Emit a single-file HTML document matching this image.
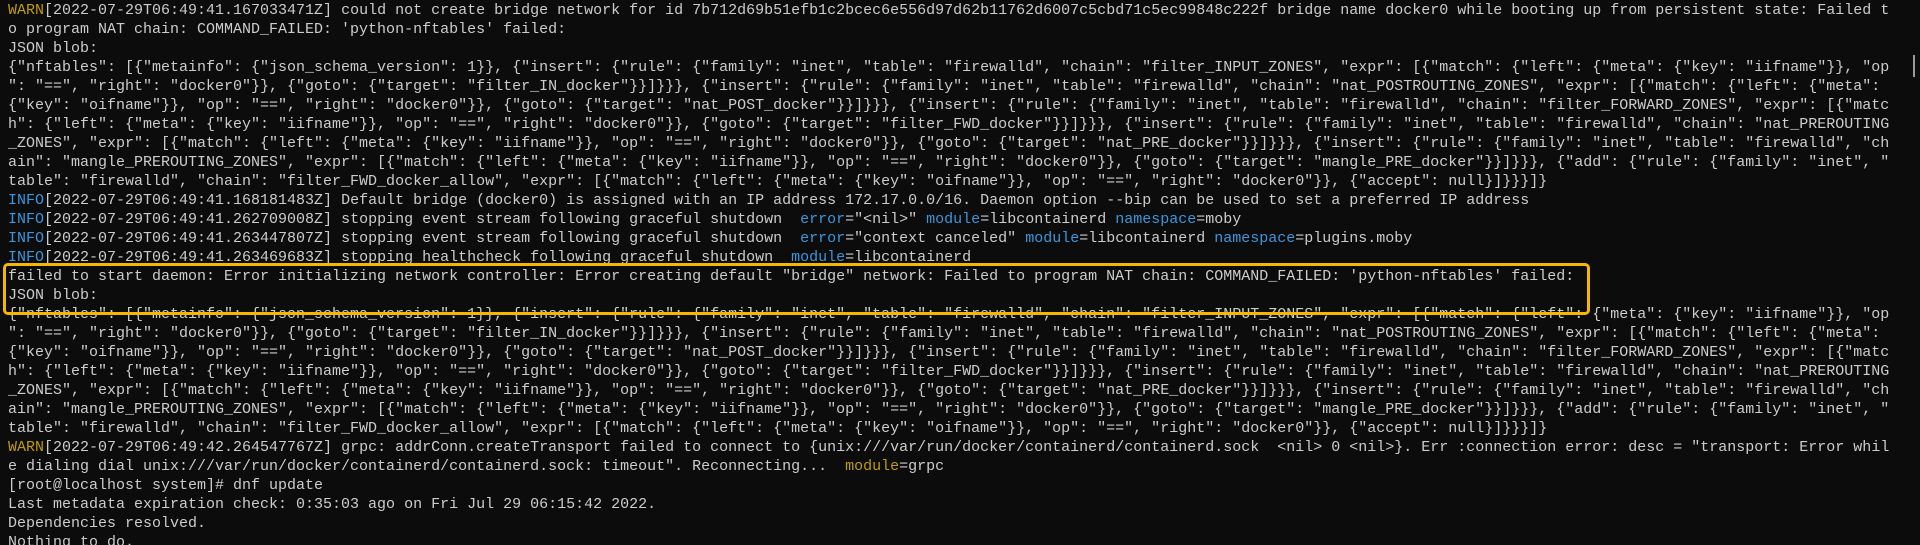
<!DOCTYPE html>
<html><head><meta charset="utf-8"><style>
html,body{margin:0;padding:0;background:#0c0c0c;width:1920px;height:545px;overflow:hidden}
pre{margin:0;padding:1px 0 0 8px;font-family:"Liberation Mono",monospace;font-size:15px;line-height:19px;color:#cccccc;white-space:pre}
.w{color:#c19c00}.i{color:#3a96dd}
.box{position:absolute;left:3px;top:263px;width:1581px;height:46px;border:3px solid #f5b800;border-radius:5px}
.sb{position:absolute;left:1913px;top:55px;width:2px;height:22px;background:#9a9a9a}
</style></head><body>
<pre><span class="w">WARN</span>[2022-07-29T06:49:41.167033471Z] could not create bridge network for id 7b712d69b51efb1c2bcec6e556d97d62b11762d6007c5cbd71c5ec99848c222f bridge name docker0 while booting up from persistent state: Failed t
o program NAT chain: COMMAND_FAILED: 'python-nftables' failed:
JSON blob:
{"nftables": [{"metainfo": {"json_schema_version": 1}}, {"insert": {"rule": {"family": "inet", "table": "firewalld", "chain": "filter_INPUT_ZONES", "expr": [{"match": {"left": {"meta": {"key": "iifname"}}, "op
": "==", "right": "docker0"}}, {"goto": {"target": "filter_IN_docker"}}]}}}, {"insert": {"rule": {"family": "inet", "table": "firewalld", "chain": "nat_POSTROUTING_ZONES", "expr": [{"match": {"left": {"meta": 
{"key": "oifname"}}, "op": "==", "right": "docker0"}}, {"goto": {"target": "nat_POST_docker"}}]}}}, {"insert": {"rule": {"family": "inet", "table": "firewalld", "chain": "filter_FORWARD_ZONES", "expr": [{"matc
h": {"left": {"meta": {"key": "iifname"}}, "op": "==", "right": "docker0"}}, {"goto": {"target": "filter_FWD_docker"}}]}}}, {"insert": {"rule": {"family": "inet", "table": "firewalld", "chain": "nat_PREROUTING
_ZONES", "expr": [{"match": {"left": {"meta": {"key": "iifname"}}, "op": "==", "right": "docker0"}}, {"goto": {"target": "nat_PRE_docker"}}]}}}, {"insert": {"rule": {"family": "inet", "table": "firewalld", "ch
ain": "mangle_PREROUTING_ZONES", "expr": [{"match": {"left": {"meta": {"key": "iifname"}}, "op": "==", "right": "docker0"}}, {"goto": {"target": "mangle_PRE_docker"}}]}}}, {"add": {"rule": {"family": "inet", "
table": "firewalld", "chain": "filter_FWD_docker_allow", "expr": [{"match": {"left": {"meta": {"key": "oifname"}}, "op": "==", "right": "docker0"}}, {"accept": null}]}}}]}
<span class="i">INFO</span>[2022-07-29T06:49:41.168181483Z] Default bridge (docker0) is assigned with an IP address 172.17.0.0/16. Daemon option --bip can be used to set a preferred IP address
<span class="i">INFO</span>[2022-07-29T06:49:41.262709008Z] stopping event stream following graceful shutdown  <span class="i">error</span>="&lt;nil&gt;" <span class="i">module</span>=libcontainerd <span class="i">namespace</span>=moby
<span class="i">INFO</span>[2022-07-29T06:49:41.263447807Z] stopping event stream following graceful shutdown  <span class="i">error</span>="context canceled" <span class="i">module</span>=libcontainerd <span class="i">namespace</span>=plugins.moby
<span class="i">INFO</span>[2022-07-29T06:49:41.263469683Z] stopping healthcheck following graceful shutdown  <span class="i">module</span>=libcontainerd
failed to start daemon: Error initializing network controller: Error creating default "bridge" network: Failed to program NAT chain: COMMAND_FAILED: 'python-nftables' failed:
JSON blob:
{"nftables": [{"metainfo": {"json_schema_version": 1}}, {"insert": {"rule": {"family": "inet", "table": "firewalld", "chain": "filter_INPUT_ZONES", "expr": [{"match": {"left": {"meta": {"key": "iifname"}}, "op
": "==", "right": "docker0"}}, {"goto": {"target": "filter_IN_docker"}}]}}}, {"insert": {"rule": {"family": "inet", "table": "firewalld", "chain": "nat_POSTROUTING_ZONES", "expr": [{"match": {"left": {"meta": 
{"key": "oifname"}}, "op": "==", "right": "docker0"}}, {"goto": {"target": "nat_POST_docker"}}]}}}, {"insert": {"rule": {"family": "inet", "table": "firewalld", "chain": "filter_FORWARD_ZONES", "expr": [{"matc
h": {"left": {"meta": {"key": "iifname"}}, "op": "==", "right": "docker0"}}, {"goto": {"target": "filter_FWD_docker"}}]}}}, {"insert": {"rule": {"family": "inet", "table": "firewalld", "chain": "nat_PREROUTING
_ZONES", "expr": [{"match": {"left": {"meta": {"key": "iifname"}}, "op": "==", "right": "docker0"}}, {"goto": {"target": "nat_PRE_docker"}}]}}}, {"insert": {"rule": {"family": "inet", "table": "firewalld", "ch
ain": "mangle_PREROUTING_ZONES", "expr": [{"match": {"left": {"meta": {"key": "iifname"}}, "op": "==", "right": "docker0"}}, {"goto": {"target": "mangle_PRE_docker"}}]}}}, {"add": {"rule": {"family": "inet", "
table": "firewalld", "chain": "filter_FWD_docker_allow", "expr": [{"match": {"left": {"meta": {"key": "oifname"}}, "op": "==", "right": "docker0"}}, {"accept": null}]}}}]}
<span class="w">WARN</span>[2022-07-29T06:49:42.264547767Z] grpc: addrConn.createTransport failed to connect to {unix:///var/run/docker/containerd/containerd.sock  &lt;nil&gt; 0 &lt;nil&gt;}. Err :connection error: desc = "transport: Error whil
e dialing dial unix:///var/run/docker/containerd/containerd.sock: timeout". Reconnecting...  <span class="w">module</span>=grpc
[root@localhost system]# dnf update
Last metadata expiration check: 0:35:03 ago on Fri Jul 29 06:15:42 2022.
Dependencies resolved.
Nothing to do.</pre>
<div class="box"></div>
<div class="sb"></div>
</body></html>
